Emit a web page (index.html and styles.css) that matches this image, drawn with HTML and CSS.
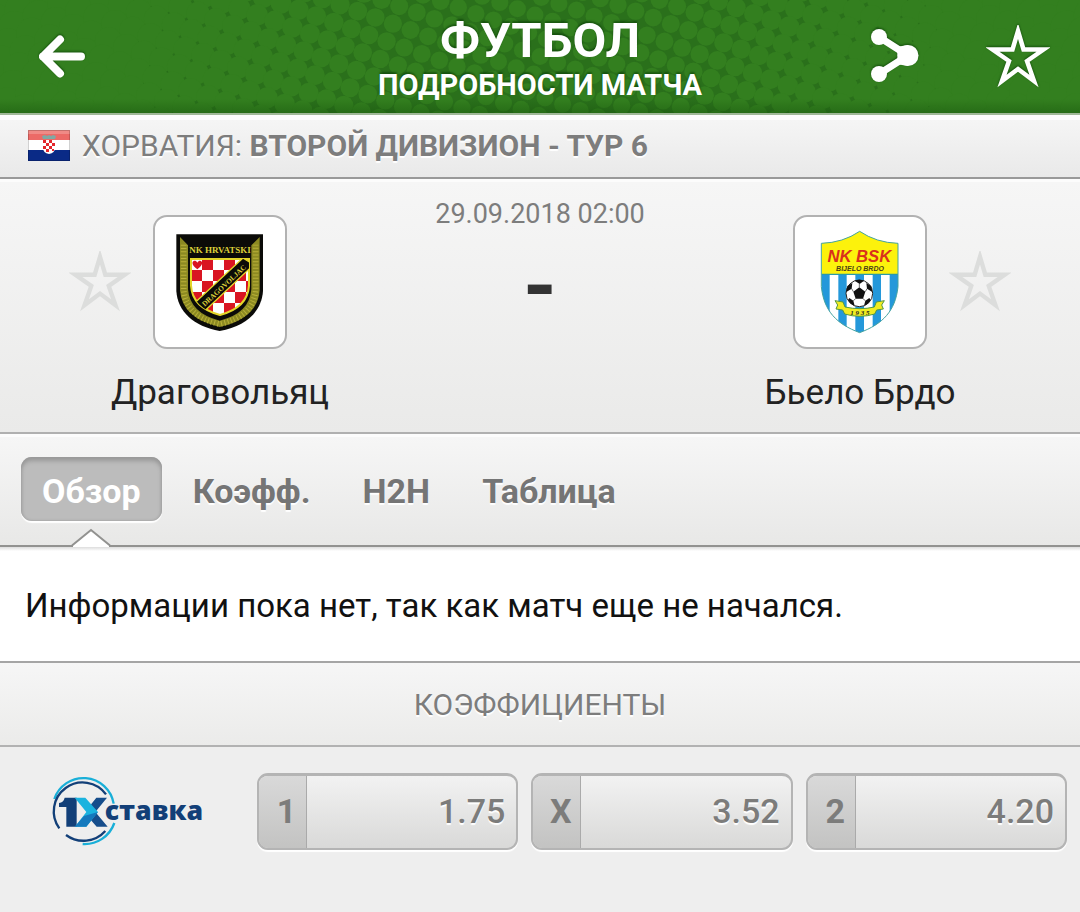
FILE: index.html
```
<!DOCTYPE html>
<html lang="ru">
<head>
<meta charset="utf-8">
<meta name="viewport" content="width=device-width, initial-scale=1">
<title>Футбол – подробности матча</title>
<link rel="stylesheet" href="styles.css">
</head>
<body>
<header class="topbar">
  <svg class="topbar-dots" aria-hidden="true"></svg>
  <button class="icon-button" type="button" aria-label="Назад">
    <svg width="62" height="62" viewBox="0 0 62 62"><path d="M30 13.500 13 30.500l17 17M13 30.500h38" fill="none" stroke="#fff" stroke-width="8" stroke-linecap="round" stroke-linejoin="round"/></svg>
  </button>
  <div class="heading">
    <h1 class="heading-title">ФУТБОЛ</h1>
    <p class="heading-sub">ПОДРОБНОСТИ МАТЧА</p>
  </div>
  <div class="actions">
    <button class="icon-button" type="button" aria-label="Поделиться">
      <svg width="62" height="62" viewBox="0 0 62 62"><path d="M15 11 44 29.500 15 48" fill="none" stroke="#fff" stroke-width="7"/><path d="M32 21q3 8.500 0 17l12 2V19z" fill="#fff"/><circle cx="15" cy="11" r="8" fill="#fff"/><circle cx="15" cy="48" r="8" fill="#fff"/><circle cx="44" cy="29.500" r="10.500" fill="#fff"/></svg>
    </button>
    <button class="icon-button" type="button" aria-label="Добавить в избранное">
      <svg width="64" height="64" viewBox="0 0 64 64"><path d="M32 6l5.500 18.500h20L41 36l7 20-16-12-16 12 7-20L6.500 24.500h20z" fill="none" stroke="#fff" stroke-width="4.500"/></svg>
    </button>
  </div>
</header>
<main>
  <section class="league">
    <svg class="flag" width="42" height="31" viewBox="0 0 42 31" role="img" aria-label="Хорватия">
      <rect width="42" height="31" fill="#fff"/><rect width="42" height="10" fill="#ec6a67"/><rect width="42" height="4" fill="#f08a86"/><rect y="20" width="42" height="11" fill="#0a2a86"/>
      <path d="M15 10h12v8q0 5-6 6-6-1-6-6z" fill="#fff"/>
      <path d="M15 10h3v3h-3zM21 10h3v3h-3zM18 13h3v3h-3zM24 13h3v3h-3zM15 16h3v3h-3zM21 16h3v3h-3zM18 19h3v3h-3zM24 19h2v2h-2z" fill="#e3262c"/>
      <path d="M14 6l3-1 2 1 2-1 2 1 2-1 3 1-1 3H15z" fill="#7fa9a4"/>
      <rect x=".5" y=".5" width="41" height="30" fill="none" stroke="#000" opacity=".18"/>
    </svg>
    <p class="league-name">ХОРВАТИЯ: <strong>ВТОРОЙ ДИВИЗИОН - ТУР 6</strong></p>
  </section>

  <section class="match">
    <div class="team">
      <div class="team-row">
        <button class="fav" type="button" aria-label="Добавить Драговольяц в избранное"><svg width="62" height="62" viewBox="0 0 64 64"><path d="M32 6l5.500 18.500h20L41 36l7 20-16-12-16 12 7-20L6.500 24.500h20z" fill="none" stroke="#dcdddc" stroke-width="4.500"/></svg></button>
        <div class="crest">
          <svg viewBox="30 35 390 390" width="130" height="130" role="img" aria-label="NK Hrvatski Dragovoljac">
            <defs>
              <pattern id="check" x="138" y="161" width="66" height="66" patternUnits="userSpaceOnUse"><rect width="66" height="66" fill="#fff"/><path d="M33 0h33v33H33zM0 33h33v33H0z" fill="#d91522"/></pattern>
              <clipPath id="inner"><path d="M138 161h174v80q-4 66-87 88-83-22-87-88z"/></clipPath>
            </defs>
            <path d="M94 87h260v170c-4 62-52 106-130 120C146 363 98 319 94 257z" fill="#0b0b08"/>
            <path d="M105 95l24 25v132q6 72 95 94 90-22 95-94V120l25-25v160q-6 84-120 110-113-26-119-110z" fill="#8c8a22"/>
            <path d="M116 118v136q6 80 108 102 102-22 108-102V118" fill="none" stroke="#b9b038" stroke-width="17" stroke-dasharray="3 7"/>
            <path d="M138 161h174v80q-4 66-87 88-83-22-87-88z" fill="url(#check)" stroke="#e3d629" stroke-width="6"/>
            <path d="M157 192c-28-20-8-34 0-20 8-14 28 0 0 20z" fill="#d91522"/>
            <g clip-path="url(#inner)"><path d="M152 290 294 158 326 178 178 318z" fill="#0b0b08" stroke="#e3d629" stroke-width="4"/></g>
            <text x="225" y="144" class="crest-serif crest-band">NK HRVATSKI</text>
            <text x="0" y="0" transform="translate(242 246) rotate(-43)" class="crest-serif crest-diagonal">DRAGOVOLJAC</text>
          </svg>
        </div>
        <span class="fav-space"></span>
      </div>
      <h2 class="team-name">Драговольяц</h2>
    </div>

    <div class="centre">
      <time class="kickoff" datetime="2018-09-29T02:00">29.09.2018 02:00</time>
      <span class="score">-</span>
    </div>

    <div class="team">
      <div class="team-row">
        <span class="fav-space"></span>
        <div class="crest">
          <svg viewBox="28 37 390 390" width="130" height="130" role="img" aria-label="NK BSK Bijelo Brdo">
            <defs><clipPath id="shield"><path d="M222 80q50 34 115 36v130c-8 74-46 112-115 138-69-26-107-64-115-138V116q65-2 115-36z"/></clipPath></defs>
            <g clip-path="url(#shield)">
              <rect x="100" y="75" width="245" height="315" fill="#fff"/>
              <path d="M107 210h25v180h-25zM158 210h25v180h-25zM209 210h26v180h-26zM261 210h25v180h-25zM312 210h25v180h-25z" fill="#2498da"/>
              <rect x="100" y="75" width="245" height="134" fill="#fcf20c"/>
              <path d="M100 209h245" stroke="#2a9aa8" stroke-width="4"/>
            </g>
            <path d="M222 80q50 34 115 36v130c-8 74-46 112-115 138-69-26-107-64-115-138V116q65-2 115-36z" fill="none" stroke="#45a3a0" stroke-width="3"/>
            <text x="221" y="172" class="crest-sans crest-big">NK BSK</text>
            <text x="223" y="198" class="crest-sans crest-small">BIJELO BRDO</text>
            <circle cx="221" cy="266" r="40" fill="#fff" stroke="#222" stroke-width="3"/>
            <path d="M221 248l18 13-7 21h-22l-7-21zM207 228q14-5 28 0l-13 10zM182 262l3-18 15-9-2 17zM260 262l-3-18-15-9 2 17zM191 280l12 8 4 15q-14-5-20-17zM251 280l-12 8-4 15q14-5 20-17z" fill="#111"/>
            <path d="M221 238v10M198 252l5 9M244 252l-5 9M210 282l-7 6M232 282l7 6" stroke="#222" stroke-width="2"/>
            <path d="M148 288l24 4 6 15q45 10 88 0l6-15 24-4-8 13 5 12-20 3-6 12q-45 14-90 0l-6-12-20-3 5-12z" fill="#f1ec20" stroke="#529744" stroke-width="3"/>
            <text x="223" y="330" class="crest-serif crest-year">1 9 3 5</text>
          </svg>
        </div>
        <button class="fav" type="button" aria-label="Добавить Бьело Брдо в избранное"><svg width="62" height="62" viewBox="0 0 64 64"><path d="M32 6l5.500 18.500h20L41 36l7 20-16-12-16 12 7-20L6.500 24.500h20z" fill="none" stroke="#dcdddc" stroke-width="4.500"/></svg></button>
      </div>
      <h2 class="team-name">Бьело Брдо</h2>
    </div>
  </section>

  <nav class="tabs">
    <a class="tab tab-active" href="#overview" aria-current="page">Обзор<svg class="pointer" width="40" height="19" viewBox="0 0 40 19" aria-hidden="true"><path d="M2 17 20 2l18 15v2H2z" fill="#fff"/><path d="M1 17.500 20 2l19 15.500" fill="none" stroke="#929290" stroke-width="2"/></svg></a>
    <a class="tab" href="#odds">Коэфф.</a>
    <a class="tab" href="#h2h">H2H</a>
    <a class="tab" href="#table">Таблица</a>
  </nav>

  <p class="notice" id="overview">Информации пока нет, так как матч еще не начался.</p>

  <section class="odds" id="odds">
    <h2 class="odds-title">КОЭФФИЦИЕНТЫ</h2>
    <div class="odds-row">
      <a class="bookmaker" href="#bookmaker">
        <svg width="200" height="72" viewBox="0 0 600 216" role="img" aria-label="1Xставка">
          <g fill="none" stroke-width="7">
            <path d="M79 72A92 92 0 0 1 257 86" stroke="#19afd8"/>
            <path d="M94 160A86 86 0 0 1 234 58" stroke="#123f78"/>
            <path d="M114 180A88 88 0 0 0 232 168" stroke="#123f78"/>
            <path d="M164 207A94 94 0 0 0 259 144" stroke="#19afd8"/>
          </g>
          <path d="M110 68h36v87h-31V96H93V84q14-2 17-16z" fill="#123f78"/>
          <path d="M190 87l15-19h32l-35 43 37 44h-33l-28-32z" fill="#164d8b"/>
          <path d="M140 68h32l38 43-35 44h-34l34-44z" fill="#1bb3df"/>
          <path d="M140 155l28-32 42-12-35 44z" fill="#1579bd"/>
          <text x="230" y="135" class="bookmaker-word">ставка</text>
        </svg>
      </a>
      <button class="odd" type="button"><span class="odd-key">1</span><span class="odd-value">1.75</span></button>
      <button class="odd" type="button"><span class="odd-key">X</span><span class="odd-value">3.52</span></button>
      <button class="odd" type="button"><span class="odd-key">2</span><span class="odd-value">4.20</span></button>
    </div>
  </section>
</main>
<script src="script.js"></script>
</body>
</html>
```
FILE: styles.css
```
* { box-sizing: border-box; }

body {
  margin: 0;
  min-height: 100vh;
  background: #eee;
  color: #222;
  font-family: Roboto, "Noto Sans", sans-serif;
}

h1, h2, p { margin: 0; }
button { padding: 0; border: 0; background: none; font: inherit; color: inherit; cursor: pointer; }
a { color: inherit; text-decoration: none; }
svg { display: block; }

.topbar {
  position: relative;
  display: grid;
  grid-template-columns: 1fr auto 1fr;
  align-items: center;
  height: 115px;
  padding: 0 30px;
  background: #2a701b;
  border-bottom: 2px solid #a0b898;
  color: #fff;
}
.topbar::after {
  content: "";
  position: absolute;
  inset: auto 0 0;
  height: 14px;
  background: linear-gradient(transparent, rgba(20, 80, 10, .4));
}
.topbar-dots { position: absolute; inset: 0; width: 100%; height: 100%; }
.topbar-dots circle { fill: #337f1f; }
.heading, .icon-button, .actions { position: relative; }
.icon-button svg { filter: drop-shadow(0 -1px 1px rgba(0, 50, 0, .6)); }
.heading { padding-top: 6px; text-align: center; text-shadow: 0 -2px 2px rgba(0, 50, 0, .5); }
.heading-title { font-size: 49px; line-height: 50px; font-weight: 700; }
.heading-sub { font-size: 29px; line-height: 38px; font-weight: 700; }
.actions { display: flex; justify-content: flex-end; gap: 60px; }

.league {
  display: flex;
  align-items: center;
  gap: 12px;
  height: 64px;
  padding: 0 28px 6px;
  border-top: 5px solid #fcfcfc;
  border-bottom: 2px solid #999;
  background: linear-gradient(#f5f5f5, #e9e9e9);
  color: #7d7d7d;
  text-shadow: 0 2px 1px #fff;
}
.league-name { font-size: 30px; line-height: 40px; }

.match {
  display: grid;
  grid-template-columns: 1fr 200px 1fr;
  height: 255px;
  border-top: 3px solid #fcfcfc;
  border-bottom: 2px solid #b0b0b0;
  background: linear-gradient(#f6f6f6, #eaeae9);
}
.team { display: flex; flex-direction: column; align-items: center; padding-top: 33px; }
.team-row { display: flex; align-items: center; gap: 22px; }
.fav, .fav-space { width: 62px; }
.crest { border: 2px solid #b2b2b2; border-radius: 14px; background: #fff; }
.team-name { margin-top: 21px; font-size: 35px; line-height: 46px; font-weight: 400; }
.crest-serif { font-family: "Liberation Serif", serif; font-weight: 700; fill: #dcd03a; text-anchor: middle; }
.crest-band { font-size: 27px; }
.crest-diagonal { font-size: 22px; }
.crest-year { font-size: 21px; font-style: italic; fill: #222; }
.crest-sans { font-family: "Liberation Sans", sans-serif; font-style: italic; font-weight: 700; text-anchor: middle; }
.crest-big { font-size: 50px; fill: #d9301c; }
.crest-small { font-size: 21px; fill: #4a4015; }
.centre { display: flex; flex-direction: column; align-items: center; padding-top: 14px; white-space: nowrap; }
.kickoff { font-size: 27px; line-height: 36px; color: #7d7d7d; }
.score { margin-top: 14px; font-size: 86px; line-height: 80px; font-weight: 700; color: #333; }

.tabs {
  display: flex;
  align-items: flex-start;
  gap: 10px;
  height: 113px;
  padding: 20px 21px 0;
  border-top: 3px solid #fcfcfc;
  border-bottom: 2px solid #929290;
  background: linear-gradient(#f6f6f6, #e8e8e7);
  color: #757575;
}
.tab {
  position: relative;
  padding: 14px 21px 10px;
  font-size: 34px;
  line-height: 40px;
  font-weight: 700;
  text-shadow: 0 2px 1px #fff;
}
.tab-active {
  border-radius: 11px;
  background: #bcbcbc;
  box-shadow: inset 0 4px 4px #999, inset 0 0 3px #999, 0 2px 1px #fff;
  color: #fff;
  text-shadow: none;
}
.pointer { position: absolute; left: calc(50% - 20px); top: 71px; }

.notice {
  padding: 38px 25px 34px;
  background: linear-gradient(#ddd, #fff 4px);
  color: #111;
  font-size: 33px;
  line-height: 42px;
}

.odds-title {
  height: 86px;
  border-top: 2px solid #a5a5a5;
  border-bottom: 2px solid #b2b2b2;
  background: linear-gradient(#f6f6f6, #ebebea);
  color: #7d7d7d;
  font-size: 30px;
  line-height: 84px;
  font-weight: 400;
  text-align: center;
  text-shadow: 0 2px 1px #fff;
}
.odds-row { display: flex; gap: 13px; padding: 26px 13px 62px 28px; }
.bookmaker { flex: none; width: 216px; padding-top: 2px; }
.bookmaker-word { font-family: "Open Sans", sans-serif; font-size: 80px; font-weight: 800; fill: #123f78; }
.odd {
  display: flex;
  flex: 1;
  height: 77px;
  border: 2px solid #b4b4b4;
  border-top-width: 3px;
  border-radius: 11px;
  background: linear-gradient(#f2f2f2, #d9d9d8);
  box-shadow: 0 2px 1px #fff;
  color: #7c7c7b;
  font-size: 34px;
  line-height: 70px;
  overflow: hidden;
}
.odd-key {
  width: 48px;
  padding-left: 8px;
  border-right: 1px solid #aaa;
  background: linear-gradient(#d9d9d9, #c3c3c2);
  font-weight: 700;
}
.odd-value { flex: 1; padding-right: 11px; font-weight: 500; text-align: right; text-shadow: 0 2px 1px #fff; }
```
FILE: script.js
```
// Halftone texture of the header: dots grow from the centre until they merge.
const svg = document.querySelector(".topbar-dots");
const width = svg.clientWidth;
const height = svg.clientHeight;
const stepX = 17.600;
const stepY = 6.300;
for (let i = -50; i <= 50; i++) {
  for (let j = -50; j <= 50; j++) {
    const x = width / 2 + i * stepX - j * stepY;
    const y = height / 2 + i * stepY + j * stepX;
    if (x < -20 || x > width + 20 || y < -20 || y > height + 20) continue;
    const distance = Math.abs(x - width / 2) / 400;
    const dot = document.createElementNS("http://www.w3.org/2000/svg", "circle");
    dot.setAttribute("cx", x);
    dot.setAttribute("cy", y);
    dot.setAttribute("r", 8.500 + 4.500 * distance * distance);
    svg.append(dot);
  }
}
```
